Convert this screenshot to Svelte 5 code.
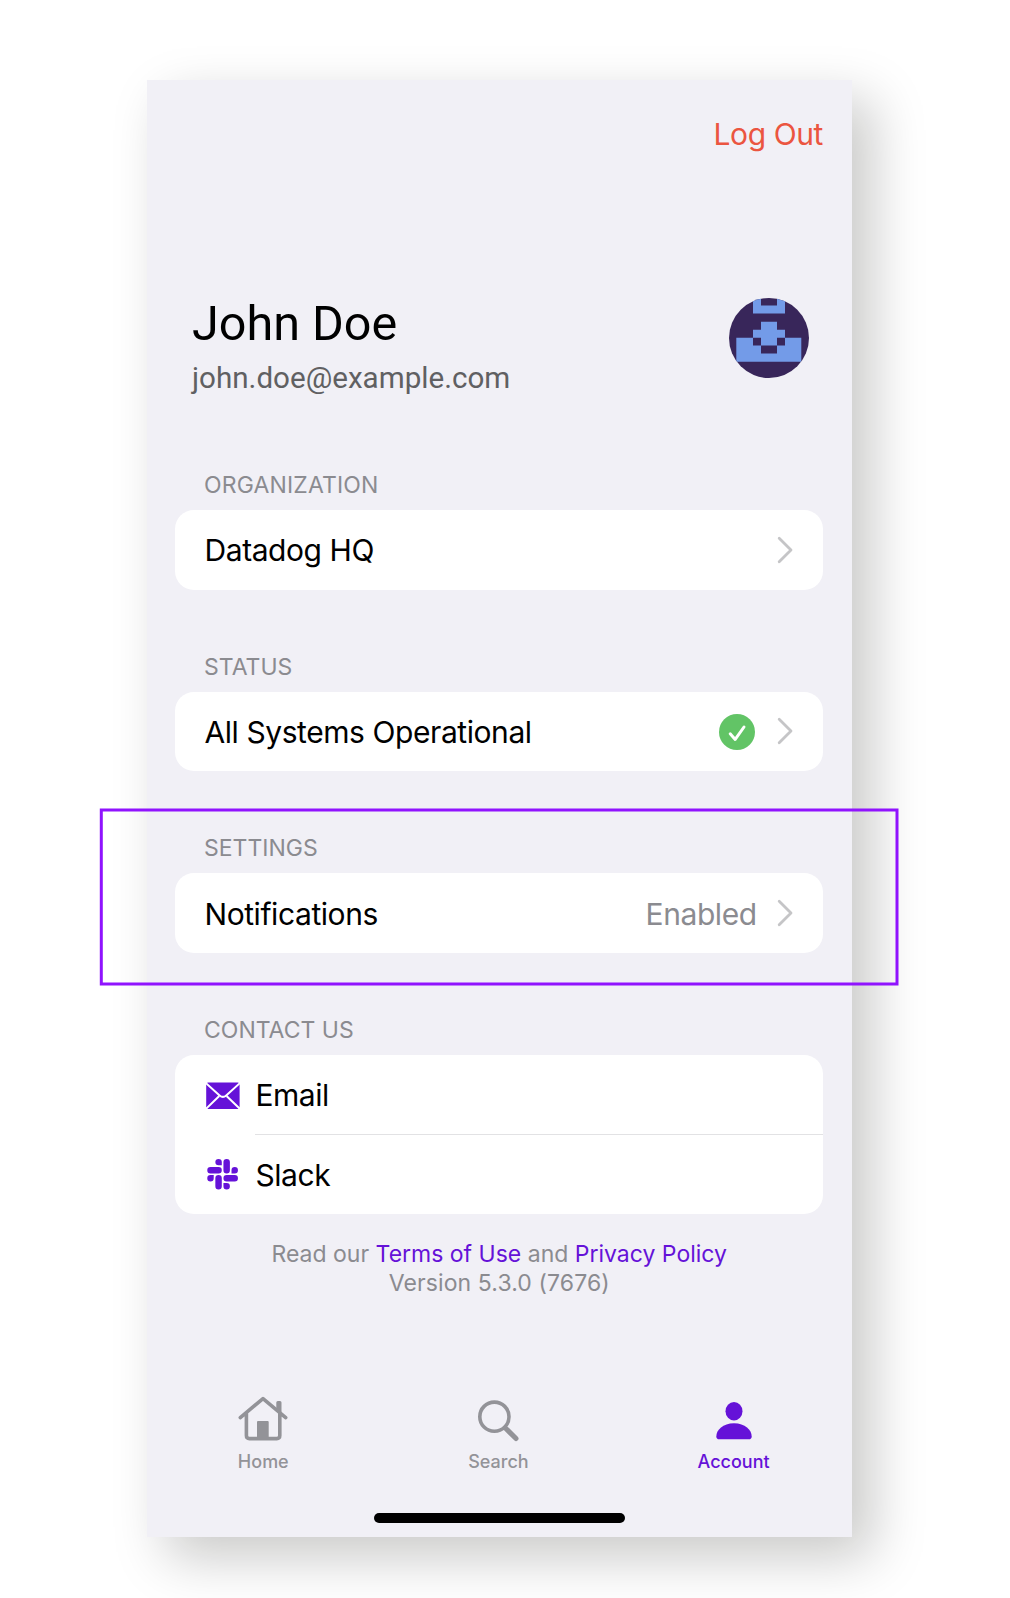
<script>
  const mail = 'john.doe@example.com';
</script>

{#snippet chevron()}
  <svg class="chevron" viewBox="0 0 16 28" aria-hidden="true"><path d="M2.2 2.3 14 14 2.2 25.7" /></svg>
{/snippet}

<main class="stage">
  <div class="phone">
    <header class="topbar"><button class="logout">Log Out</button></header>

    <section class="profile">
      <div>
        <h1 class="name">John Doe</h1>
        <p class="mail">{mail}</p>
      </div>
      <svg class="avatar" viewBox="0 0 80 80" aria-hidden="true">
        <defs><clipPath id="round"><circle cx="40" cy="40" r="40" /></clipPath></defs>
        <g clip-path="url(#round)">
          <path fill="#38265a" d="M0 0h80v80H0z" />
          <path fill="#739be8" d="M24 0h8v7.5h16V0h8v15.5H24zM32 23.7h16v8h8v8h16.3v24h-65v-24H24v-8h8z" />
          <path fill="#38265a" d="M24 39.7h8v7.8h16v-7.8h8v7.8h-8v8H32v-8h-8z" />
        </g>
      </svg>
    </section>

    <section class="group">
      <h2 class="wide">Organization</h2>
      <div class="card">
        <div class="row"><span class="label">Datadog HQ</span><span class="end">{@render chevron()}</span></div>
      </div>
    </section>

    <section class="group">
      <h2>Status</h2>
      <div class="card">
        <div class="row">
          <span class="label">All Systems Operational</span>
          <span class="end">
            <svg class="check" viewBox="0 0 36 36" aria-hidden="true"><circle cx="18" cy="18" r="18" /><path d="m11.2 19.8 5 5.6 8.8-12.4" /></svg>
            {@render chevron()}
          </span>
        </div>
      </div>
    </section>

    <section class="group">
      <h2>Settings</h2>
      <div class="card">
        <div class="row"><span class="label">Notifications</span><span class="end"><span class="label value">Enabled</span>{@render chevron()}</span></div>
      </div>
    </section>

    <section class="group">
      <h2>Contact us</h2>
      <div class="card">
        <div class="row linked">
          <svg class="icon" viewBox="0 0 34 34" aria-hidden="true">
            <rect x=".2" y="3.6" width="33.4" height="26.4" rx="2" />
            <path class="fold" d="M0 4.2 13.6 16.4q3.3 3 6.6 0L33.8 4.2M0 29.8l13-12.6M33.8 29.8l-13-12.6" />
          </svg>
          <span class="body"><span class="label">Email</span></span>
        </div>
        <div class="row linked">
          <svg class="icon" viewBox="-1 -.7 26.6 26.6" aria-hidden="true">
            <path d="M5.042 15.165a2.528 2.528 0 0 1-2.52 2.523A2.528 2.528 0 0 1 0 15.165a2.527 2.527 0 0 1 2.522-2.52h2.52v2.52zM6.313 15.165a2.527 2.527 0 0 1 2.521-2.52 2.527 2.527 0 0 1 2.521 2.52v6.313A2.528 2.528 0 0 1 8.834 24a2.528 2.528 0 0 1-2.521-2.522v-6.313zM8.834 5.042a2.528 2.528 0 0 1-2.521-2.52A2.528 2.528 0 0 1 8.834 0a2.528 2.528 0 0 1 2.521 2.522v2.52H8.834zM8.834 6.313a2.528 2.528 0 0 1 2.521 2.521 2.528 2.528 0 0 1-2.521 2.521H2.522A2.528 2.528 0 0 1 0 8.834a2.528 2.528 0 0 1 2.522-2.521h6.312zM18.956 8.834a2.528 2.528 0 0 1 2.522-2.521A2.528 2.528 0 0 1 24 8.834a2.528 2.528 0 0 1-2.522 2.521h-2.522V8.834zM17.688 8.834a2.528 2.528 0 0 1-2.523 2.521 2.527 2.527 0 0 1-2.52-2.521V2.522A2.527 2.527 0 0 1 15.165 0a2.528 2.528 0 0 1 2.523 2.522v6.312zM15.165 18.956a2.528 2.528 0 0 1 2.523 2.522A2.528 2.528 0 0 1 15.165 24a2.527 2.527 0 0 1-2.52-2.522v-2.522h2.52zM15.165 17.688a2.527 2.527 0 0 1-2.52-2.523 2.526 2.526 0 0 1 2.52-2.52h6.313A2.527 2.527 0 0 1 24 15.165a2.528 2.528 0 0 1-2.522 2.523h-6.313z" />
          </svg>
          <span class="body"><span class="label">Slack</span></span>
        </div>
      </div>
    </section>

    <footer class="legal">
      <p>Read our <span class="link">Terms of Use</span> and <span class="link">Privacy Policy</span></p>
      <p class="version">Version 5.3.0 (7676)</p>
    </footer>

    <nav class="tabs">
      <div class="tab">
        <svg viewBox="0 0 50 48" aria-hidden="true">
          <path class="line" d="M2.3 23.6 25 4.6l22.7 19M8.4 19v22.6q0 3 3 3h27.4q3 0 3-3V19" />
          <path d="M19 28q0-1 1-1h9.7q1 0 1 1v17H19zM38.3 8.5q0-1.5 1.5-1.5h2.2q1.5 0 1.5 1.5V20l-5.2-4z" />
        </svg>
        <span>Home</span>
      </div>
      <div class="tab">
        <svg viewBox="-.6 0 50 48" aria-hidden="true">
          <circle class="line lens" cx="20.8" cy="22.7" r="14.6" />
          <path class="line handle" d="m32 34.2 10.4 10.4" />
        </svg>
        <span>Search</span>
      </div>
      <div class="tab active">
        <svg viewBox="0 0 50 48" aria-hidden="true">
          <ellipse cx="25" cy="17.2" rx="8.5" ry="9.2" />
          <path d="M7.3 42.4C7.3 36 14 29.3 25 29.3S42.7 36 42.7 42.4q0 2.8-3 2.8H10.3q-3 0-3-2.8z" />
        </svg>
        <span>Account</span>
      </div>
    </nav>
    <div class="indicator"></div>
  </div>
  <svg class="highlight" viewBox="0 0 800 178" aria-hidden="true"><rect x="2.3" y="2" width="795.7" height="174" /></svg>
</main>

<style>
  :global(body) { background: #fff; }
  .stage {
    position: relative;
    box-sizing: border-box;
    width: 1010px;
    height: 1598px;
    padding: 80px 158px 61px 146.5px;
    overflow: hidden;
    font-family: Inter, "Liberation Sans", sans-serif;
    color: #000;
  }
  .phone {
    display: flex;
    flex-direction: column;
    height: 1457px;
    background: #f1f0f6;
    box-shadow: 20px 20px 50px rgba(8, 8, 4, 0.22);
  }
  h1, h2, p { margin: 0; font-weight: 400; }
  .topbar { display: flex; justify-content: flex-end; padding: 34px 29px 0 0; }
  .logout {
    padding: 0;
    border: 0;
    background: none;
    font: 400 30px/40px Inter, sans-serif;
    letter-spacing: -0.4px;
    color: #eb5540;
  }
  .profile {
    display: flex;
    justify-content: space-between;
    height: 103px;
    margin-top: 139px;
    padding: 0 43px 0 45.5px;
    font-family: Roboto, sans-serif;
  }
  .name { padding-top: 1px; font-size: 48.5px; line-height: 60px; }
  .mail { margin-top: 6px; font-size: 29.6px; line-height: 36px; color: #606062; }
  .avatar { width: 80px; height: 80px; margin-top: 5px; }
  .group { padding: 0 29px 0 28.5px; margin-top: 62px; }
  .profile + .group { margin-top: 74px; }
  h2 {
    padding-left: 29px;
    margin-bottom: 10px;
    font-size: 23px;
    line-height: 30px;
    text-transform: uppercase;
    color: #8b8b90;
  }
  .wide { letter-spacing: 0.15px; }
  .card { border-radius: 19px; background: #fff; }
  .row {
    display: flex;
    align-items: center;
    height: 79.6px;
    padding: 0 30.5px 0 29.5px;
    font-size: 30px;
  }
  .label { padding-top: 1.2px; letter-spacing: -0.43px; }
  .end { display: flex; align-items: center; gap: 22px; margin-left: auto; }
  .value { margin-right: -2.2px; color: #8b8b90; }
  .chevron { width: 16px; height: 28px; fill: none; stroke: #c5c5c7; stroke-width: 2.8; stroke-linecap: round; stroke-linejoin: round; }
  .check { width: 36px; height: 36px; margin-top: 1px; fill: #62c466; }
  .check path { fill: none; stroke: #fff; stroke-width: 3; stroke-linecap: round; stroke-linejoin: round; }
  .linked { gap: 15px; padding: 0 0 0 31px; }
  .icon { width: 34px; height: 34px; margin-top: 1.5px; fill: #6512d8; }
  .fold { fill: none; stroke: #fff; stroke-width: 2; }
  .body { display: flex; flex: 1; align-items: center; height: 100%; box-sizing: border-box; }
  .linked .label { padding-left: 0.4px; }
  .linked:first-child { height: 80px; }
  .linked:first-child .body { border-bottom: 1px solid #e2e2e4; }
  .linked:first-child .label { padding-top: 2px; }
  .legal { padding-top: 25.5px; text-align: center; font-size: 23px; line-height: 29px; color: #8b8b90; }
  .version { letter-spacing: 0.1px; }
  .link { color: #6512d8; }
  .tabs { display: grid; grid-template-columns: repeat(3, 1fr); margin: auto 0.8px 0 -0.8px; color: #939398; }
  .tab { display: flex; flex-direction: column; align-items: center; gap: 8.5px; font-size: 18px; font-weight: 500; line-height: 22px; }
  .tab svg { width: 50px; height: 48px; fill: currentColor; }
  .tab .line { fill: none; stroke: currentColor; stroke-width: 3.6; stroke-linecap: round; stroke-linejoin: round; }
  .tab .handle { stroke-width: 5; }
  .tab.active { color: #6512d8; }
  .indicator { width: 251.5px; height: 9.5px; margin: 40.5px auto 14.5px; border-radius: 5px; background: #000; }
  .highlight {
    position: absolute;
    left: 99px;
    top: 808px;
    width: 800px;
    height: 178px;
    fill: none;
    stroke: #9013fe;
    stroke-width: 3;
  }
</style>
